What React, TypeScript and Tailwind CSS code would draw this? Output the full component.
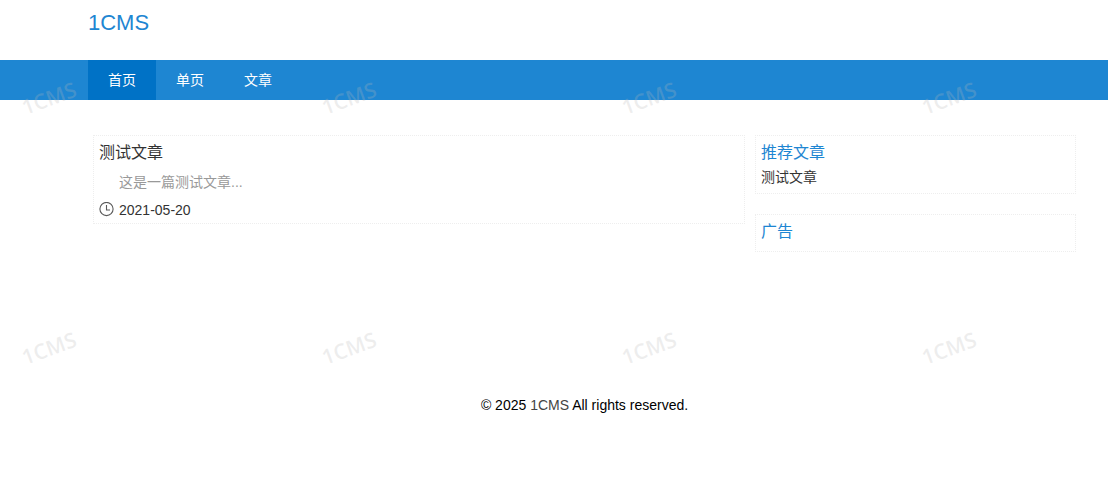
import type { ReactNode } from "react";

const links = [
  { href: "#home", label: "首页", active: true },
  { href: "#page", label: "单页", active: false },
  { href: "#article", label: "文章", active: false },
];

const watermarks = Array.from({ length: 8 }, (_, i) => i);

function ClockIcon() {
  return (
    <svg className="h-4 w-4 text-[#5a5a5a]" viewBox="0 0 16 16" fill="none" stroke="currentColor" aria-hidden="true">
      <circle cx="7.5" cy="7" r="6.6" strokeWidth="1.1" />
      <path d="M7.5 3v5H11" strokeWidth="1.1" />
    </svg>
  );
}

function Panel({ title, children }: { title: string; children?: ReactNode }) {
  return (
    <section className="border border-dotted border-[#eee] px-[5px] pb-1">
      <h2 className="pt-0.5 text-base leading-[30px] text-[#1e86d2]">{title}</h2>
      {children}
    </section>
  );
}

function Watermark() {
  return (
    <div className="pointer-events-none absolute inset-0 overflow-hidden" aria-hidden="true">
      <div className="grid w-max grid-cols-[repeat(4,300px)] auto-rows-[250px]">
        {watermarks.map((i) => (
          <div key={i} className="flex items-start pt-[83px]">
            <span className="w-[98px] -rotate-20 text-center font-['Open_Sans'] text-[21px] leading-[30px] font-semibold text-[#b8b8b8]/25">
              1CMS
            </span>
          </div>
        ))}
      </div>
    </div>
  );
}

export default function App() {
  return (
    <div className="relative min-h-screen bg-white font-['Liberation_Sans','Noto_Sans_CJK_SC',sans-serif] text-sm text-black">
      <header>
        <div className="h-15 pl-22">
          <a href="#home" className="text-[22px] leading-[45px] text-[#1e86d2]">
            1CMS
          </a>
        </div>
        <nav className="flex bg-[#1e86d2] pl-22">
          {links.map(({ href, label, active }) => (
            <a
              key={href}
              href={href}
              className={`px-5 leading-10 text-white ${active ? "bg-[#0072c6]" : "hover:bg-[#0072c6]"}`}
            >
              {label}
            </a>
          ))}
        </nav>
      </header>

      <div className="pr-[27px] pl-22">
        <div className="grid grid-cols-3 items-start pt-[35px]">
          {/* Article list */}
          <main className="col-span-2 px-[5px]">
            <article className="border border-dotted border-[#eee] px-[5px] text-[#333]">
              <h2 className="pt-0.5 text-base leading-[30px]">
                <a href="#article-1">测试文章</a>
              </h2>
              <p className="pl-5 leading-7 text-[#999]">这是一篇测试文章...</p>
              <div className="flex h-[27px] items-center gap-1">
                <ClockIcon />
                <time dateTime="2021-05-20">2021-05-20</time>
              </div>
            </article>
          </main>

          {/* Sidebar */}
          <aside className="flex flex-col gap-5 px-[5px]">
            <Panel title="推荐文章">
              <a href="#article-1" className="mb-0.5 block leading-[19px] text-[#333]">
                测试文章
              </a>
            </Panel>
            <Panel title="广告" />
          </aside>
        </div>

        <footer className="pt-[143px] text-center leading-5">
          © 2025{" "}
          <a href="#home" className="text-[#444]">
            1CMS
          </a>{" "}
          All rights reserved.
        </footer>
      </div>

      <Watermark />
    </div>
  );
}
